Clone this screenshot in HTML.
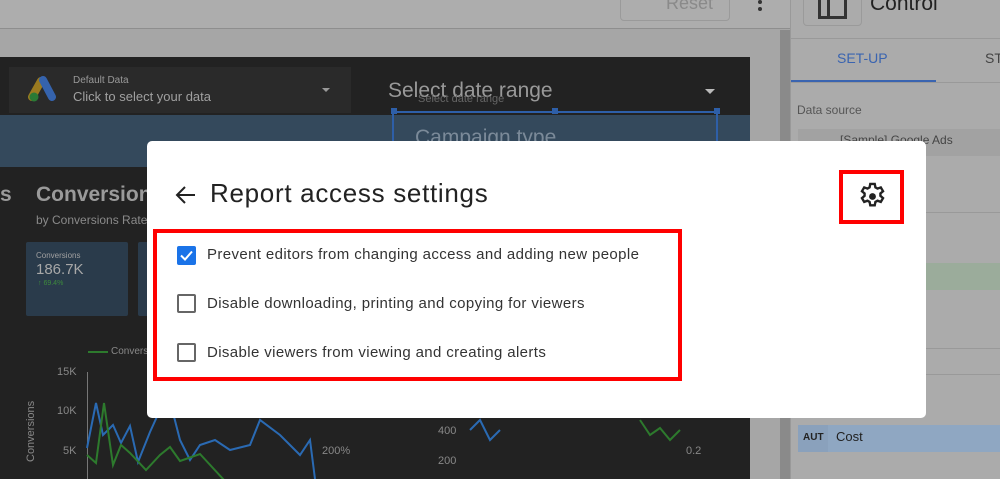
<!DOCTYPE html>
<html><head><meta charset="utf-8"><style>
*{margin:0;padding:0;box-sizing:border-box}
body{width:1000px;height:479px;overflow:hidden;position:relative;background:#a6a6a6;font-family:"Liberation Sans",sans-serif}
.a{position:absolute}
</style></head><body>
<!-- top bar -->
<div class="a" style="left:0;top:0;width:790px;height:29px;background:#adadad;border-bottom:1px solid #8e8e8e"></div>
<div class="a" style="left:620px;top:-4px;width:110px;height:25px;border:1px solid #9a9a9a;border-radius:4px;color:#8a8a8a;font-size:18px;padding-left:45px;line-height:12px">Reset</div>
<div class="a" style="left:758px;top:0;width:4px;height:4px;background:#333;border-radius:50%"></div>
<div class="a" style="left:758px;top:7px;width:4px;height:4px;background:#333;border-radius:50%"></div>
<!-- scrollbar -->
<div class="a" style="left:780px;top:30px;width:10px;height:449px;background:#8a8a8a"></div>
<!-- dashboard -->
<div class="a" style="left:0;top:57px;width:750px;height:422px;background:#222"></div>
<div class="a" style="left:8px;top:66px;width:344px;height:48px;background:#2a2a2a;border:1px solid #222"></div>
<svg class="a" style="left:28px;top:75px" width="32" height="28"><path d="M4 22 L13 6" stroke="#9a7a20" stroke-width="8" stroke-linecap="round"/><path d="M15 5 L24 22" stroke="#3563ad" stroke-width="8" stroke-linecap="round"/><circle cx="6" cy="22" r="4.5" fill="#2a7a35"/></svg>
<div class="a" style="left:73px;top:75px;color:#999;font-size:10px">Default Data</div>
<div class="a" style="left:73px;top:89px;color:#a0a0a0;font-size:13px">Click to select your data</div>
<div class="a" style="left:322px;top:88px;border:4px solid transparent;border-top:4px solid #999"></div>
<div class="a" style="left:388px;top:79px;color:#999;font-size:21px">Select date range</div>
<div class="a" style="left:418px;top:93px;color:#666;font-size:11px">Select date range</div>
<div class="a" style="left:705px;top:89px;border:5px solid transparent;border-top:5px solid #bbb"></div>
<div class="a" style="left:0;top:115px;width:750px;height:52px;background:#34495c"></div>
<div class="a" style="left:392px;top:111px;width:326px;height:2px;background:#2e5fa8"></div>
<div class="a" style="left:391px;top:108px;width:6px;height:6px;background:#2e5fa8"></div>
<div class="a" style="left:552px;top:108px;width:6px;height:6px;background:#2e5fa8"></div>
<div class="a" style="left:714px;top:108px;width:6px;height:6px;background:#2e5fa8"></div>
<div class="a" style="left:392px;top:111px;width:2px;height:40px;background:#2e5fa8"></div>
<div class="a" style="left:716px;top:111px;width:2px;height:40px;background:#2e5fa8"></div>
<div class="a" style="left:415px;top:126px;color:#7b8a99;font-size:21px">Campaign type</div>
<div class="a" style="left:0;top:183px;color:#9a9a9a;font-size:21px;font-weight:bold">s</div>
<div class="a" style="left:36px;top:183px;color:#9a9a9a;font-size:21px;font-weight:bold">Conversions</div>
<div class="a" style="left:36px;top:213px;color:#8a8a8a;font-size:12px">by Conversions Rate</div>
<div class="a" style="left:26px;top:242px;width:102px;height:74px;background:#2a3b4b;border-radius:2px"></div>
<div class="a" style="left:138px;top:242px;width:102px;height:74px;background:#2a3b4b;border-radius:2px"></div>
<div class="a" style="left:36px;top:251px;color:#a0a0a0;font-size:8px">Conversions</div>
<div class="a" style="left:36px;top:261px;color:#a8a8a8;font-size:15px">186.7K</div>
<div class="a" style="left:38px;top:280px;color:#3d8a3d;font-size:7px">↑ 69.4%</div>
<div class="a" style="left:88px;top:351px;width:20px;height:2px;background:#2d7a2d"></div>
<div class="a" style="left:111px;top:346px;color:#888;font-size:10px">Conversions</div>
<div class="a" style="left:57px;top:366px;color:#888;font-size:11px">15K</div>
<div class="a" style="left:57px;top:405px;color:#888;font-size:11px">10K</div>
<div class="a" style="left:63px;top:445px;color:#888;font-size:11px">5K</div>
<div class="a" style="left:25px;top:462px;color:#888;font-size:11px;transform:rotate(-90deg);transform-origin:0 0">Conversions</div>
<div class="a" style="left:322px;top:445px;color:#888;font-size:11px">200%</div>
<div class="a" style="left:438px;top:425px;color:#888;font-size:11px">400</div>
<div class="a" style="left:438px;top:455px;color:#888;font-size:11px">200</div>
<div class="a" style="left:686px;top:445px;color:#888;font-size:11px">0.2</div>
<div class="a" style="left:87px;top:372px;width:1px;height:107px;background:#777"></div>
<svg class="a" style="left:0;top:380px" width="750" height="99"><polyline fill="none" stroke="#2a6ab3" stroke-width="2" points="87,68 96,23 103,55 113,45 121,63 130,46 138,82 150,52 160,30 171,25 180,60 190,80 200,65 215,60 230,70 250,65 260,40 280,55 300,75 310,60 315,99"/><polyline fill="none" stroke="#2d7a2d" stroke-width="2" points="87,75 96,83 104,23 113,85 121,65 130,73 146,90 160,75 170,67 180,81 200,74 224,100"/><polyline fill="none" stroke="#2d7a2d" stroke-width="2" points="640,40 650,55 660,48 670,60 680,50"/><polyline fill="none" stroke="#2a6ab3" stroke-width="2" points="470,50 480,40 490,60 500,50"/></svg>
<!-- right panel -->
<div class="a" style="left:790px;top:0;width:210px;height:479px;background:#ababab;border-left:1px solid #999"></div>
<div class="a" style="left:803px;top:-5px;width:59px;height:31px;border:1px solid #9a9a9a;border-radius:4px"></div>
<div class="a" style="left:818px;top:-5px;width:29px;height:24px;border:3px solid #333;border-top:none"></div>
<div class="a" style="left:827px;top:-5px;width:3px;height:24px;background:#333"></div>
<div class="a" style="left:870px;top:-8px;color:#222;font-size:21px">Control</div>
<div class="a" style="left:790px;top:38px;width:210px;height:1px;background:#999"></div>
<div class="a" style="left:837px;top:50px;color:#3a64b0;font-size:14px">SET-UP</div>
<div class="a" style="left:985px;top:50px;color:#444;font-size:14px">ST</div>
<div class="a" style="left:791px;top:80px;width:145px;height:2px;background:#3a64b0"></div>
<div class="a" style="left:790px;top:82px;width:210px;height:1px;background:#999"></div>
<div class="a" style="left:797px;top:103px;color:#555;font-size:12px">Data source</div>
<div class="a" style="left:798px;top:129px;width:202px;height:27px;background:#a2a2a2;color:#444;font-size:12px;padding:4px 0 0 42px">[Sample] Google Ads</div>
<div class="a" style="left:790px;top:212px;width:210px;height:1px;background:#999"></div>
<div class="a" style="left:790px;top:263px;width:210px;height:27px;background:#9bac9b"></div>
<div class="a" style="left:790px;top:348px;width:210px;height:1px;background:#999"></div>
<div class="a" style="left:790px;top:374px;width:210px;height:1px;background:#999"></div>
<div class="a" style="left:798px;top:425px;width:202px;height:27px;background:#8fa7c2"></div>
<div class="a" style="left:798px;top:425px;width:30px;height:27px;background:#8aa1bc;color:#222;font-size:10px;font-weight:bold;padding:7px 0 0 5px">AUT</div>
<div class="a" style="left:836px;top:429px;color:#222;font-size:13px">Cost</div>
<!-- modal -->
<div class="a" style="left:147px;top:141px;width:779px;height:277px;background:#fff;border-radius:5px"></div>
<svg class="a" style="left:174px;top:184px" width="24" height="22"><path d="M21 11 H3 M11 3 L3 11 L11 19" fill="none" stroke="#222" stroke-width="2"/></svg>
<div class="a" style="left:210px;top:178px;color:#222;font-size:26px;letter-spacing:0.7px;white-space:nowrap">Report access settings</div>
<div class="a" style="left:839px;top:170px;width:65px;height:54px;border:4px solid #f00"></div>
<svg class="a" style="left:858px;top:182px" width="29" height="29" viewBox="1 1 22 22"><path fill="none" stroke="#222" stroke-width="1.8" d="M10.3 2.5h3.4l.5 2.6 1.6.9 2.5-.9 1.7 2.9-2 1.7v1.8l2 1.7-1.7 2.9-2.5-.9-1.6.9-.5 2.6h-3.4l-.5-2.6-1.6-.9-2.5.9-1.7-2.9 2-1.7v-1.8l-2-1.7 1.7-2.9 2.5.9 1.6-.9z"/><circle cx="12" cy="12" r="2.6" fill="#222"/></svg>
<div class="a" style="left:153px;top:229px;width:529px;height:152px;border:4px solid #f00"></div>
<div class="a" style="left:177px;top:246px;width:19px;height:19px;background:#1a73e8;border-radius:2px"></div>
<svg class="a" style="left:177px;top:246px" width="19" height="19"><path d="M4 9.5 L8 13.5 L15 5.5" fill="none" stroke="#fff" stroke-width="2"/></svg>
<div class="a" style="left:207px;top:246px;color:#333;font-size:15px;letter-spacing:0.38px;white-space:nowrap">Prevent editors from changing access and adding new people</div>
<div class="a" style="left:177px;top:294px;width:19px;height:19px;border:2px solid #666;border-radius:2px"></div>
<div class="a" style="left:207px;top:295px;color:#333;font-size:15px;letter-spacing:0.38px;white-space:nowrap">Disable downloading, printing and copying for viewers</div>
<div class="a" style="left:177px;top:343px;width:19px;height:19px;border:2px solid #666;border-radius:2px"></div>
<div class="a" style="left:207px;top:344px;color:#333;font-size:15px;letter-spacing:0.38px;white-space:nowrap">Disable viewers from viewing and creating alerts</div>
</body></html>
